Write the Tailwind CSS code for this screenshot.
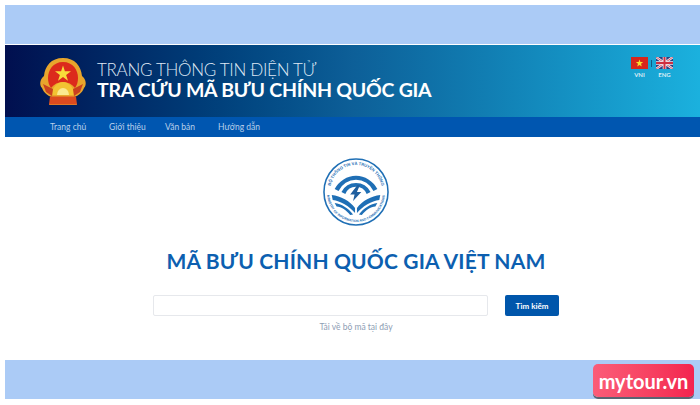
<!DOCTYPE html>
<html lang="en">
<head>
    <meta charset="UTF-8">
    <title>Tra cứu mã bưu chính quốc gia</title>
    <script src="https://cdn.jsdelivr.net/npm/@tailwindcss/browser@4"></script>
</head>
<body class="bg-white">
<div class="relative w-[700px] h-[405px] overflow-hidden pt-[5px] pl-[5px] font-['Lato',sans-serif]">

    <!-- Top band -->
    <div class="h-[39px] bg-[#abcbf6]"></div>

    <!-- Header -->
    <header class="mt-px h-[72px] bg-gradient-to-r from-[#010f4f] via-[#0d5f98] to-[#1bb1de] flex relative">
        <svg class="ml-[34px] mt-[12px] w-[48px] h-[49px] shrink-0" viewBox="0 0 48 49">
            <path d="M24 1C12 1 6 9 5 19C1 22 0 28 3 31C5 36 9 39 13 40L10 48L38 48L35 40C39 39 43 36 45 31C48 28 47 22 43 19C42 9 36 1 24 1Z" fill="#e8a52c"/>
            <path d="M24 5C14 5 9 13 9 21C9 25 10 28 12 31C15 27 19 25 24 25C29 25 33 27 36 31C38 28 39 25 39 21C39 13 34 5 24 5Z" fill="#dc2a1c"/>
            <path d="M24 8.500L25.900 14.300H32L27.100 17.900L29 23.700L24 20.100L19 23.700L20.900 17.900L16 14.300H22.100Z" fill="#f8dc3a"/>
            <path d="M13 38A11 13 0 0 1 35 38Z" fill="#f2c332"/>
            <path d="M18 38A6 7 0 0 1 30 38Z" fill="#fbe98f"/>
            <path d="M4 27L14 32L13 39L7 35Z M44 27L34 32L35 39L41 35Z" fill="#c9401f"/>
            <path d="M11 39.500H37L38 47.500H10Z" fill="#dc4a1f"/>
        </svg>
        <div class="ml-[10px] mt-[15px] text-white">
            <div class="text-[17px] leading-[20px] font-light tracking-[-0.3px] text-[#dfe8f4] whitespace-nowrap">TRANG THÔNG TIN ĐIỆN TỬ</div>
            <div class="text-[19.5px] leading-[20px] font-bold tracking-[-0.25px] whitespace-nowrap">TRA CỨU MÃ BƯU CHÍNH QUỐC GIA</div>
        </div>
        <div class="absolute left-[626px] top-[12px] flex items-start">
            <div class="w-[17px] flex flex-col items-center">
                <svg class="w-[17px] h-[12px]" viewBox="0 0 17 12">
                    <rect width="17" height="12" fill="#d8261c"/>
                    <path d="M8.500 2.400L9.400 5.100H12.200L10 6.800L10.800 9.500L8.500 7.900L6.200 9.500L7 6.800L4.800 5.100H7.600Z" fill="#f7e02e"/>
                </svg>
                <span class="text-[6px] leading-[8px] mt-[2px] font-bold text-[#dcecf5]">VNI</span>
            </div>
            <div class="w-px h-[7px] bg-[#14597f] mx-[3px] mt-[3px]"></div>
            <div class="w-[17px] ml-px flex flex-col items-center">
                <svg class="w-[17px] h-[12px]" viewBox="0 0 17 12">
                    <rect width="17" height="12" fill="#2b3f80"/>
                    <path d="M0 0L17 12M17 0L0 12" stroke="#f3e6ea" stroke-width="2.400"/>
                    <path d="M0 0L17 12M17 0L0 12" stroke="#cf3a4c" stroke-width="0.800"/>
                    <path d="M8.500 0V12M0 6H17" stroke="#f3e6ea" stroke-width="3.600"/>
                    <path d="M8.500 0V12M0 6H17" stroke="#cf2f3f" stroke-width="2"/>
                </svg>
                <span class="text-[6px] leading-[8px] mt-[2px] font-bold text-[#dcecf5]">ENG</span>
            </div>
        </div>
    </header>

    <!-- Nav -->
    <nav class="h-5 bg-[#0056b0] flex items-center pl-[45px] gap-[23px] text-[8.5px] text-[#b9d0ea] whitespace-nowrap">
        <a href="#" class="w-[36px]">Trang chủ</a>
        <a href="#" class="w-[33px]">Giới thiệu</a>
        <a href="#" class="w-[30px]">Văn bản</a>
        <a href="#">Hướng dẫn</a>
    </nav>

    <!-- Main -->
    <main class="h-[223px] bg-white flex flex-col items-center pl-[7px] relative">
        <svg class="mt-[21px] w-[66px] h-[68px]" viewBox="0 0 68 68" preserveAspectRatio="none">
            <defs>
                <path id="ring-top" d="M7 34A27 27 0 0 1 61 34"/>
                <path id="ring-bottom" d="M4 34A30 30 0 0 0 64 34"/>
            </defs>
            <circle cx="34" cy="34" r="33" fill="#fff" stroke="#1f6fb5" stroke-width="1.600"/>
            <text font-size="4.200" font-weight="700" fill="#1f6fb5" font-family="Liberation Sans, sans-serif" text-anchor="middle"><textPath href="#ring-top" startOffset="50%">BỘ THÔNG TIN VÀ TRUYỀN THÔNG</textPath></text>
            <text font-size="3.400" font-weight="700" fill="#1f6fb5" font-family="Liberation Sans, sans-serif" text-anchor="middle"><textPath href="#ring-bottom" startOffset="50%">MINISTRY OF INFORMATION AND COMMUNICATIONS</textPath></text>
            <path d="M12 31A25 25 0 0 1 56 31L52 33A20 20 0 0 0 16 33Z" fill="#1f6fb5"/>
            <path d="M19 34A17 17 0 0 1 49 34L45 36A12 12 0 0 0 23 36Z" fill="#1f6fb5"/>
            <path d="M35.500 27L28 36.500H32.500L31 43L39.500 34H35L38 27Z" fill="#1f5f9f"/>
            <path d="M9 37C18 38 28 43 33 50V55C27 48 18 43 10 42Z" fill="#1f6fb5"/>
            <path d="M59 37C50 38 40 43 35 50V55C41 48 50 43 58 42Z" fill="#1f6fb5"/>
            <path d="M12 45C19 46 26 50 31 56.500L28 57C24 52 19 49 14 48.500Z" fill="#1f6fb5"/>
            <path d="M56 45C49 46 42 50 37 56.500L40 57C44 52 49 49 54 48.500Z" fill="#1f6fb5"/>
        </svg>
        <h1 class="mt-[20px] text-[21px] leading-[30px] font-bold text-[#0c5fb0] tracking-[0.16px] whitespace-nowrap">MÃ BƯU CHÍNH QUỐC GIA VIỆT NAM</h1>
        <div class="mt-[19px] flex gap-[17px]">
            <input type="text" class="w-[335px] h-[21px] bg-white border border-[#e6e8ec] rounded-[2px]">
            <button class="w-[54px] h-[21px] bg-[#0056ab] rounded-[2px] text-white text-[8px] font-bold">Tìm kiếm</button>
        </div>
        <a href="#" class="mt-[5px] text-[8.5px] leading-[12px] text-[#8d9db4]">Tải về bộ mã tại đây</a>
    </main>

    <!-- Bottom band -->
    <div class="h-[39px] bg-[#abcbf6]"></div>

    <!-- Watermark -->
    <div class="absolute left-[593px] top-[364px] w-[101px] h-[33px] rounded-[5px] bg-gradient-to-r from-[#fb5c78] to-[#f3224f] shadow-[0_2px_0_#5b6472] flex items-center justify-center text-white text-[20px] font-bold">mytour.vn</div>
</div>
</body>
</html>
